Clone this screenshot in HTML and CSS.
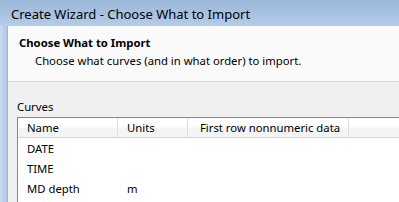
FILE: index.html
```html
<!DOCTYPE html>
<html>
<head>
<meta charset="utf-8">
<link rel="stylesheet" href="styles.css">
</head>
<body>
<div class="window">
  <div class="titlebar">Create Wizard - Choose What to Import</div>
  <div class="client">
    <div class="header">
      <div class="h-title">Choose What to Import</div>
      <div class="h-sub">Choose what curves (and in what order) to import.</div>
    </div>
    <div class="body">
      <div class="label">Curves</div>
      <div class="list">
        <div class="list-head">
          <div class="col c1">Name</div>
          <div class="col c2">Units</div>
          <div class="col c3">First row nonnumeric data</div>
          <div class="col c4"></div>
        </div>
        <div class="rows">
          <div class="row"><div class="cell c1">DATE</div><div class="cell c2"></div></div>
          <div class="row"><div class="cell c1">TIME</div><div class="cell c2"></div></div>
          <div class="row"><div class="cell c1">MD depth</div><div class="cell c2">m</div></div>
        </div>
      </div>
    </div>
  </div>
</div>
</body>
</html>
```
FILE: styles.css
```css
html, body {
  margin: 0;
  padding: 0;
}
body {
  width: 399px;
  height: 202px;
  overflow: hidden;
  font-family: "Noto Sans", "Open Sans", sans-serif;
  font-size: 11.3px;
  color: #000;
  background: linear-gradient(to right, #c3d7ee 0, #c3d7ee 3px, #b5cde9 3px, #b5cde9 7px, #9fb3c9 7px, #9fb3c9 8px);
}
.window {
  display: flex;
  flex-direction: column;
  height: 202px;
}
.titlebar {
  height: 26px;
  flex: none;
  box-sizing: border-box;
  padding-left: 11px;
  padding-top: 5px;
  font-size: 13px;
  line-height: 18px;
  color: #000;
  background: linear-gradient(to bottom, #9bb7d8 0%, #a9c3e2 60%, #b5cde9 100%);
  white-space: nowrap;
}
.client {
  flex: 1;
  margin-left: 8px;
  background: #f0f0f0;
  display: flex;
  flex-direction: column;
  overflow: hidden;
}
.header {
  flex: none;
  height: 55px;
  background: #fafafa;
  border-bottom: 1px solid #ddd5d7;
  padding-left: 11px;
}
.h-title {
  font-weight: bold;
  line-height: 16px;
  padding-top: 9px;
}
.h-sub {
  padding-left: 16px;
  line-height: 16px;
  padding-top: 2px;
}
.body {
  padding-left: 9px;
  padding-top: 17px;
}
.label {
  line-height: 16px;
  height: 16px;
}
.list {
  margin-top: 2px;
  width: 460px;
  height: 120px;
  background: #fff;
  border: 1px solid #828790;
}
.list-head {
  display: flex;
  height: 19px;
  border-bottom: 1px solid #d5d5d5;
  background: linear-gradient(to bottom, #ffffff 0%, #ffffff 45%, #f3f4f6 55%, #f3f4f6 100%);
}
.col {
  box-sizing: border-box;
  line-height: 19px;
  padding-left: 9px;
  border-right: 1px solid #dee0e4;
  white-space: nowrap;
}
.c1 { width: 100px; }
.c2 { width: 70px; }
.c3 { width: 161px; padding-left: 12px; }
.c4 { width: 100px; }
.rows {
  padding-top: 1px;
}
.row {
  display: flex;
  height: 20px;
  line-height: 20px;
}
.cell {
  box-sizing: border-box;
  padding-left: 9px;
  white-space: nowrap;
}
```
